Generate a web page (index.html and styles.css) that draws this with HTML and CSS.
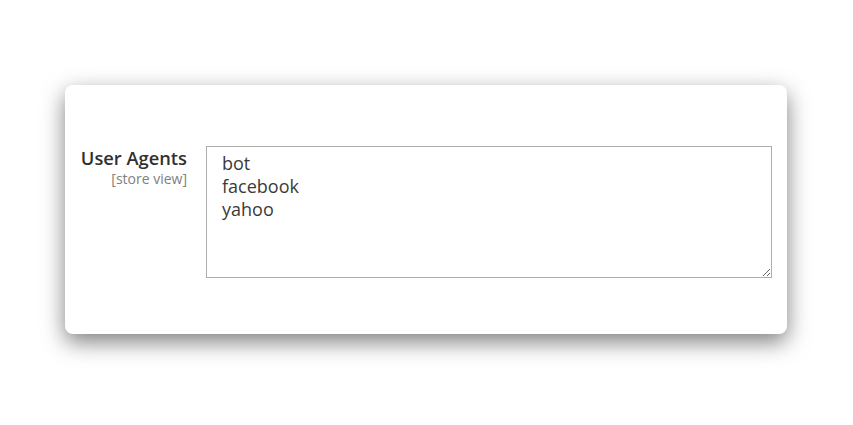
FILE: index.html
```html
<!DOCTYPE html>
<html>
<head>
<meta charset="utf-8">
<link rel="stylesheet" href="styles.css">
</head>
<body>
<div class="card">
  <div class="field">
    <div class="label">
      <span class="label-text">User Agents</span>
      <span class="scope">[store view]</span>
    </div>
    <textarea class="control">bot
facebook
yahoo</textarea>
  </div>
</div>
</body>
</html>
```
FILE: styles.css
```css
html, body {
  margin: 0;
  padding: 0;
  background: #ffffff;
}
body {
  font-family: "Open Sans", "Liberation Sans", sans-serif;
  padding-top: 85px;
  min-height: 425px;
  box-sizing: border-box;
}
.card {
  box-sizing: border-box;
  margin-left: 65px;
  width: 722px;
  height: 249px;
  background: #ffffff;
  border-radius: 8px;
  box-shadow: 0 8px 22px rgba(0, 0, 0, 0.5);
  padding: 61px 15px 0 15px;
}
.field {
  display: flex;
  align-items: flex-start;
}
.label {
  width: 107px;
  margin-right: 19px;
  display: flex;
  flex-direction: column;
  align-items: flex-end;
  text-align: right;
}
.label-text {
  font-size: 18.3px;
  font-weight: 600;
  line-height: 22px;
  margin-top: 1px;
  color: #303030;
}
.scope {
  font-size: 14px;
  line-height: 16px;
  margin-top: 2px;
  color: #808080;
}
.control {
  box-sizing: border-box;
  flex: 1;
  height: 132px;
  margin: 0;
  border: 1px solid #adadad;
  border-radius: 0;
  padding: 5px 15px;
  font-family: "Open Sans", "Liberation Sans", sans-serif;
  font-size: 18px;
  line-height: 23px;
  color: #3a3a3a;
  background: #ffffff;
  outline: none;
}
```
